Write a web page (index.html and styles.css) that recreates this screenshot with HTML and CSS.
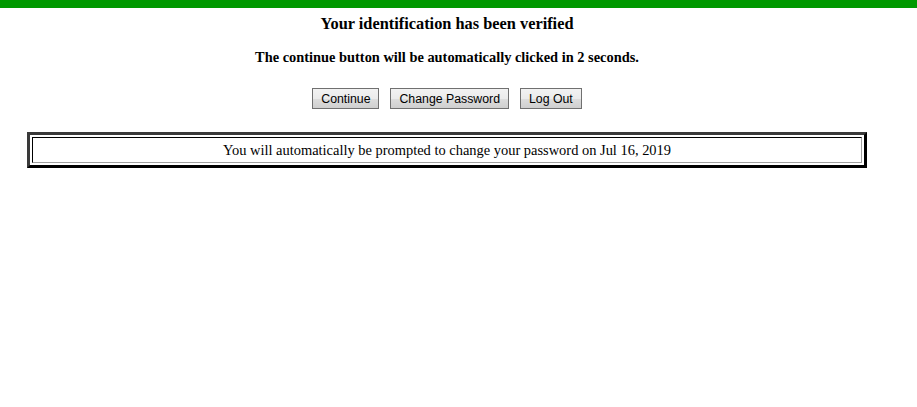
FILE: index.html
```html
<!DOCTYPE html>
<html>
<head>
<meta charset="utf-8">
<title>Identification verified</title>
<link rel="stylesheet" href="styles.css">
</head>
<body>
<div class="topbar"></div>
<div class="page">
  <h1 class="title">Your identification has been verified</h1>
  <h2 class="subtitle">The continue button will be automatically clicked in 2 seconds.</h2>
  <div class="actions">
    <button class="btn" type="button">Continue</button>
    <button class="btn" type="button">Change Password</button>
    <button class="btn" type="button">Log Out</button>
  </div>
  <table class="notice">
    <tr><td class="notice-cell">You will automatically be prompted to change your password on Jul 16, 2019</td></tr>
  </table>
</div>
</body>
</html>
```
FILE: styles.css
```css
html, body {
  margin: 0;
  padding: 0;
  background: #ffffff;
  font-family: "Liberation Serif", "Times New Roman", serif;
  color: #000000;
}
.topbar {
  height: 8px;
  background: #009900;
}
.page {
  width: 894px;
  text-align: center;
}
.title {
  margin: 6px 0 0 0;
  font-size: 16.35px;
  line-height: 20px;
  font-weight: bold;
}
.subtitle {
  margin: 14px 0 0 0;
  font-size: 14.4px;
  line-height: 18px;
  font-weight: bold;
}
.actions {
  margin-top: 22px;
  display: flex;
  justify-content: center;
  gap: 11px;
}
.btn {
  font-family: "Liberation Sans", Arial, sans-serif;
  font-size: 12.3px;
  height: 21px;
  padding: 0 8px;
  border: 1px solid #707070;
  border-radius: 0;
  background: linear-gradient(#f2f2f2, #ebebeb 50%, #dddddd 51%, #cfcfcf);
  color: #000;
}
.notice {
  width: 840px;
  margin: 23px auto 0 auto;
  border-collapse: separate;
  border-spacing: 2px;
  border-width: 3px;
  border-style: solid;
  border-color: #3a3a3a #000000 #000000 #3a3a3a;
}
.notice-cell {
  border-width: 1px;
  border-style: solid;
  border-color: #000000 #a0a0a0 #a0a0a0 #000000;
  padding: 4px 1px 3px 1px;
  font-size: 14.45px;
  line-height: 17px;
  text-align: center;
}
```
